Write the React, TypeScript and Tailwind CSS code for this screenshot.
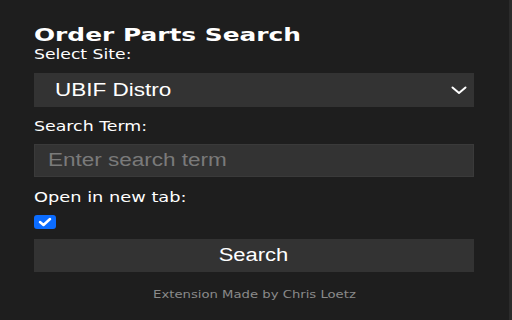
import React from "react";

const dv = { fontFamily: '"DejaVu Sans", Verdana, sans-serif' };
const ar = { fontFamily: '"Liberation Sans", Arial, sans-serif' };

export default function App() {
  return (
    <div className="w-[512px] h-[320px] bg-[#1e1e1e] overflow-hidden border-r-[3px] border-[#2b2b2b]">
      <div className="ml-[34px] w-[440px] pt-[25px] flex flex-col text-white">
        <h1 className="text-[18px] leading-[20px] font-bold" style={dv}>
          <span className="inline-block origin-left scale-x-[1.38]">Order Parts Search</span>
        </h1>
        <label className="text-[14px] leading-[18px]" style={dv}>
          <span className="inline-block origin-left scale-x-[1.23]">Select Site:</span>
        </label>
        <div className="mt-[10px] h-[34px] bg-[#333333] flex items-center justify-between pl-[21px] pr-[7px]">
          <span className="text-[18px] inline-block origin-left scale-x-[1.25]" style={ar}>UBIF Distro</span>
          <svg width="16" height="9" viewBox="0 0 16 9" className="mt-[1px]">
            <path d="M1.5 1.5 L8 7 L14.5 1.5" fill="none" stroke="white" strokeWidth="2" strokeLinecap="round" strokeLinejoin="round" />
          </svg>
        </div>
        <label className="mt-[10px] text-[14px] leading-[18px]" style={dv}>
          <span className="inline-block origin-left scale-x-[1.24]">Search Term:</span>
        </label>
        <div className="mt-[9px] h-[33px] bg-[#333333] border border-[#3a3a3a] flex items-center pl-[13px]">
          <span className="text-[18px] text-[#7a7a7a] inline-block origin-left scale-x-[1.25]" style={ar}>Enter search term</span>
        </div>
        <label className="mt-[11px] text-[14px] leading-[18px]" style={dv}>
          <span className="inline-block origin-left scale-x-[1.27]">Open in new tab:</span>
        </label>
        <div className="mt-[9px] w-[22px] h-[14px] rounded-[3px] bg-[#0b6cff] flex items-center justify-center">
          <svg width="14" height="10" viewBox="0 0 14 10">
            <path d="M2 5 L5.5 8 L12 2" fill="none" stroke="white" strokeWidth="2.5" strokeLinecap="round" strokeLinejoin="round" />
          </svg>
        </div>
        <div className="mt-[10px] h-[33px] bg-[#333333] flex items-center justify-center">
          <span className="text-[18px] inline-block scale-x-[1.22]" style={ar}>Search</span>
        </div>
        <div className="mt-[16px] text-center text-[11px] leading-[14px] text-[#8a8a8a]" style={dv}>
          <span className="inline-block scale-x-[1.2]">Extension Made by Chris Loetz</span>
        </div>
      </div>
    </div>
  );
}
